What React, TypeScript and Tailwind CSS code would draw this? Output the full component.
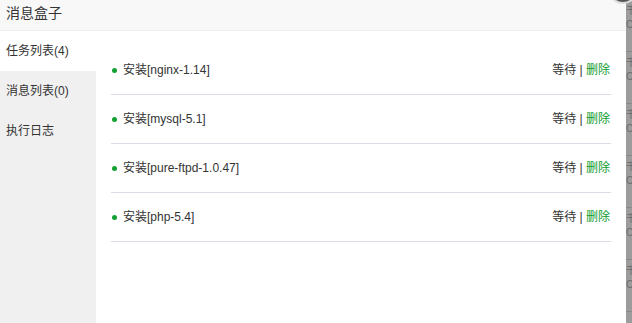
import React from "react";

const tasks = ["nginx-1.14", "mysql-5.1", "pure-ftpd-1.0.47", "php-5.4"];

const tabs = ["任务列表(4)", "消息列表(0)", "执行日志"];

const App = () => {
  return (
    <div
      className="relative flex h-[323px] w-[632px] overflow-hidden bg-white text-[#333]"
      style={{ fontFamily: '"Liberation Sans", "Noto Sans CJK SC", sans-serif' }}
    >
      {/* Modal */}
      <div className="flex h-full w-[626px] shrink-0 flex-col bg-white">
        {/* Header */}
        <div className="h-[31px] shrink-0 border-b border-[#eee] bg-[#f8f8f8] pl-[6px] text-[14px] leading-[27px] text-[#333]">
          消息盒子
        </div>

        <div className="flex flex-1">
          {/* Sidebar */}
          <div className="flex w-[96px] flex-col">
            {tabs.map((t, i) => (
              <div
                key={t}
                className={`h-[40px] pl-[6px] text-[12px] leading-[40px] text-[#333] ${
                  i === 0 ? "bg-white" : "bg-[#f0f0f0]"
                }`}
              >
                {t}
              </div>
            ))}
            <div className="flex-1 bg-[#f0f0f0]" />
          </div>

          {/* Task list */}
          <div className="flex-1 pl-[15px] pr-[15px] pt-[15px]">
            {tasks.map((name) => (
              <div
                key={name}
                className="flex h-[49px] items-center justify-between border-b border-[#dddbea] text-[12px]"
              >
                <div className="flex items-center">
                  <span className="ml-[1px] mr-[6px] inline-block h-[5px] w-[5px] rounded-full bg-[#13a032]" />
                  <span className="text-[#333]">安装[{name}]</span>
                </div>
                <div className="pr-[1px] text-[#333]">
                  等待 | <span className="text-[#0e9c2c]">删除</span>
                </div>
              </div>
            ))}
          </div>
        </div>
      </div>

      {/* Dimmed page behind */}
      <div className="flex h-full min-w-0 flex-1 flex-col overflow-hidden bg-[#9c9c9c]">
        {[0, 1, 2, 3, 4, 5].map((i) => (
          <div
            key={i}
            className="h-[52px] border-b border-[#888] pt-[4px] text-[10px] leading-[14px] text-[#6a6a6a]"
          >
            千
            <br />C
          </div>
        ))}
      </div>

      {/* Close button */}
      <div className="absolute right-[-6px] top-[-26px] h-[30px] w-[30px] rounded-full border-2 border-[#ddd] bg-[#555]" />
    </div>
  );
};

export default App;
